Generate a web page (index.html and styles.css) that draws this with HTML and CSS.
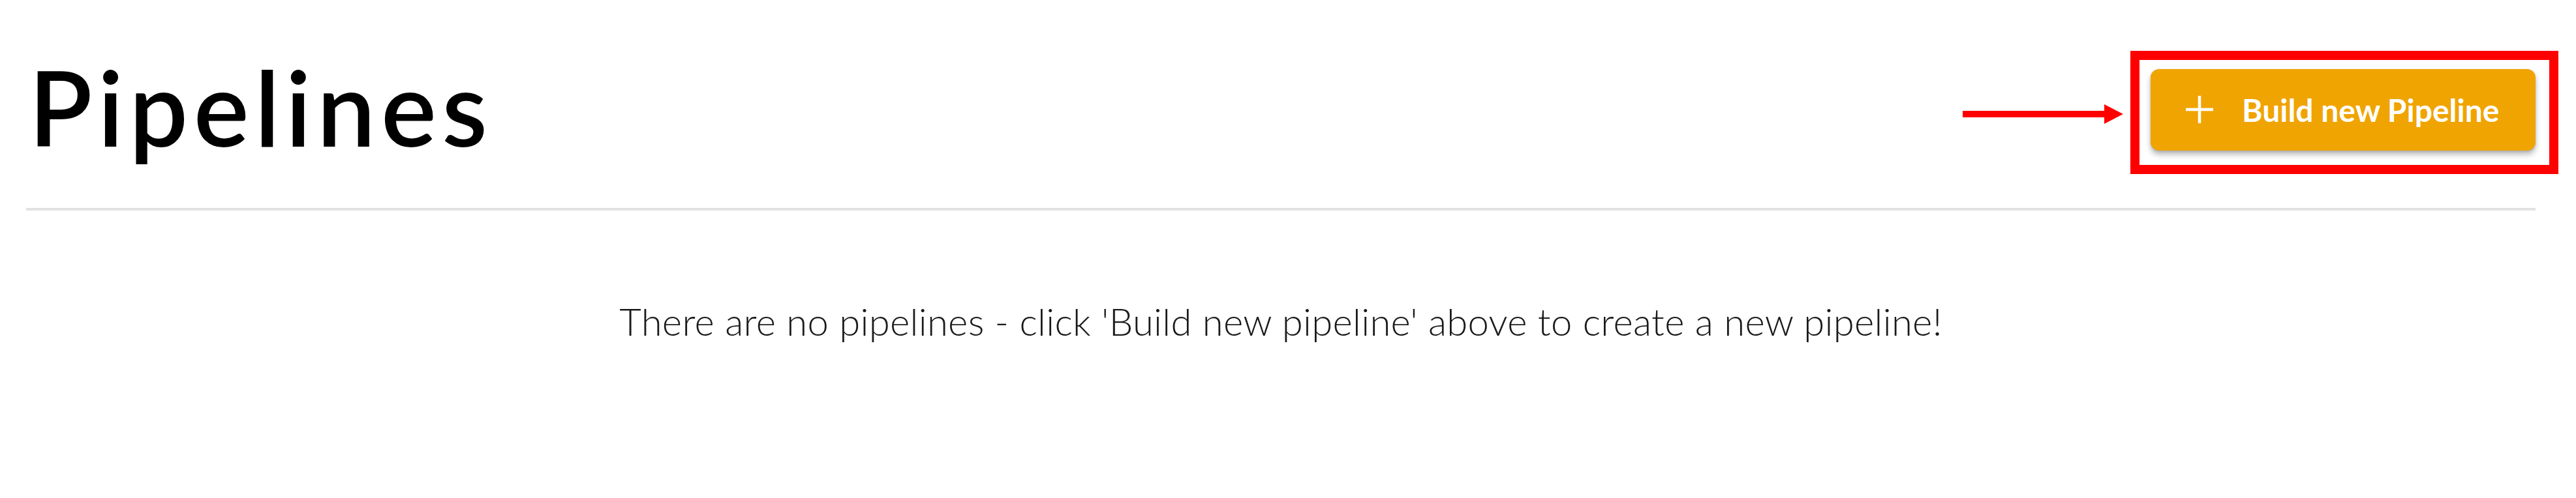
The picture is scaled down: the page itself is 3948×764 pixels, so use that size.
FILE: index.html
```html
<!DOCTYPE html>
<html lang="en">
<head>
<meta charset="utf-8">
<title>Pipelines</title>
<link rel="stylesheet" href="styles.css">
</head>
<body>
<div class="page">
  <header class="header">
    <h1 class="title">Pipelines</h1>
    <div class="cta">
      <svg class="annot-arrow" width="246" height="30" viewBox="0 0 246 30" aria-hidden="true">
        <rect x="0" y="10" width="220" height="10" fill="#ff0000"/>
        <polygon points="217,0 246,15 217,30" fill="#ff0000"/>
      </svg>
      <div class="annot-box"></div>
      <button class="btn" type="button">
        <svg class="btn-icon" width="42" height="42" viewBox="0 0 42 42" aria-hidden="true">
          <path d="M21 0 V42 M0 21 H42" stroke="#ffffff" stroke-width="4.5" fill="none"/>
        </svg>
        <span class="btn-label">Build new Pipeline</span>
      </button>
    </div>
  </header>
  <hr class="divider">
  <p class="empty">There are no pipelines - click 'Build new pipeline' above to create a new pipeline!</p>
</div>
</body>
</html>
```

FILE: styles.css
```css
html, body {
  margin: 0;
  padding: 0;
  background: #ffffff;
}

body {
  font-family: "Lato", "Liberation Sans", sans-serif;
  color: #1c1c1c;
}

.page {
  padding: 0 62px 0 40px;
}

.header {
  display: flex;
  justify-content: space-between;
  align-items: center;
  height: 240px;
  padding-top: 48px;
  padding-bottom: 31px;
  box-sizing: content-box;
}

.title {
  margin: 0 0 10px;
  padding-left: 4px;
  font-size: 160px;
  font-weight: 600;
  line-height: 1;
  letter-spacing: 8.5px;
  color: #000000;
}

.cta {
  position: relative;
}

.annot-box {
  position: absolute;
  left: -31px;
  top: -28px;
  width: 656px;
  height: 189px;
  box-sizing: border-box;
  border: 14px solid #ff0000;
  pointer-events: none;
}

.annot-arrow {
  position: absolute;
  left: -288px;
  top: 54px;
}

.btn {
  display: flex;
  align-items: center;
  width: 590px;
  height: 125px;
  padding: 0 0 0 54px;
  border: none;
  border-radius: 13px;
  background: #f0a401;
  box-shadow: 0 6px 8px rgba(0, 0, 0, 0.28), 0 1px 3px rgba(0, 0, 0, 0.12);
  color: #ffffff;
  font-family: "Lato", "Liberation Sans", sans-serif;
  font-size: 48px;
  font-weight: 700;
  cursor: pointer;
}

.btn-icon {
  flex: none;
  margin-right: 44px;
}

.btn-label {
  white-space: nowrap;
}

.divider {
  margin: 0;
  height: 4px;
  border: none;
  background: #e2e2e2;
}

.empty {
  margin: 135px 0 0;
  text-align: center;
  font-size: 58px;
  font-weight: 300;
  line-height: 1.2;
  letter-spacing: 0.3px;
  color: #1a1a1a;
}
```
